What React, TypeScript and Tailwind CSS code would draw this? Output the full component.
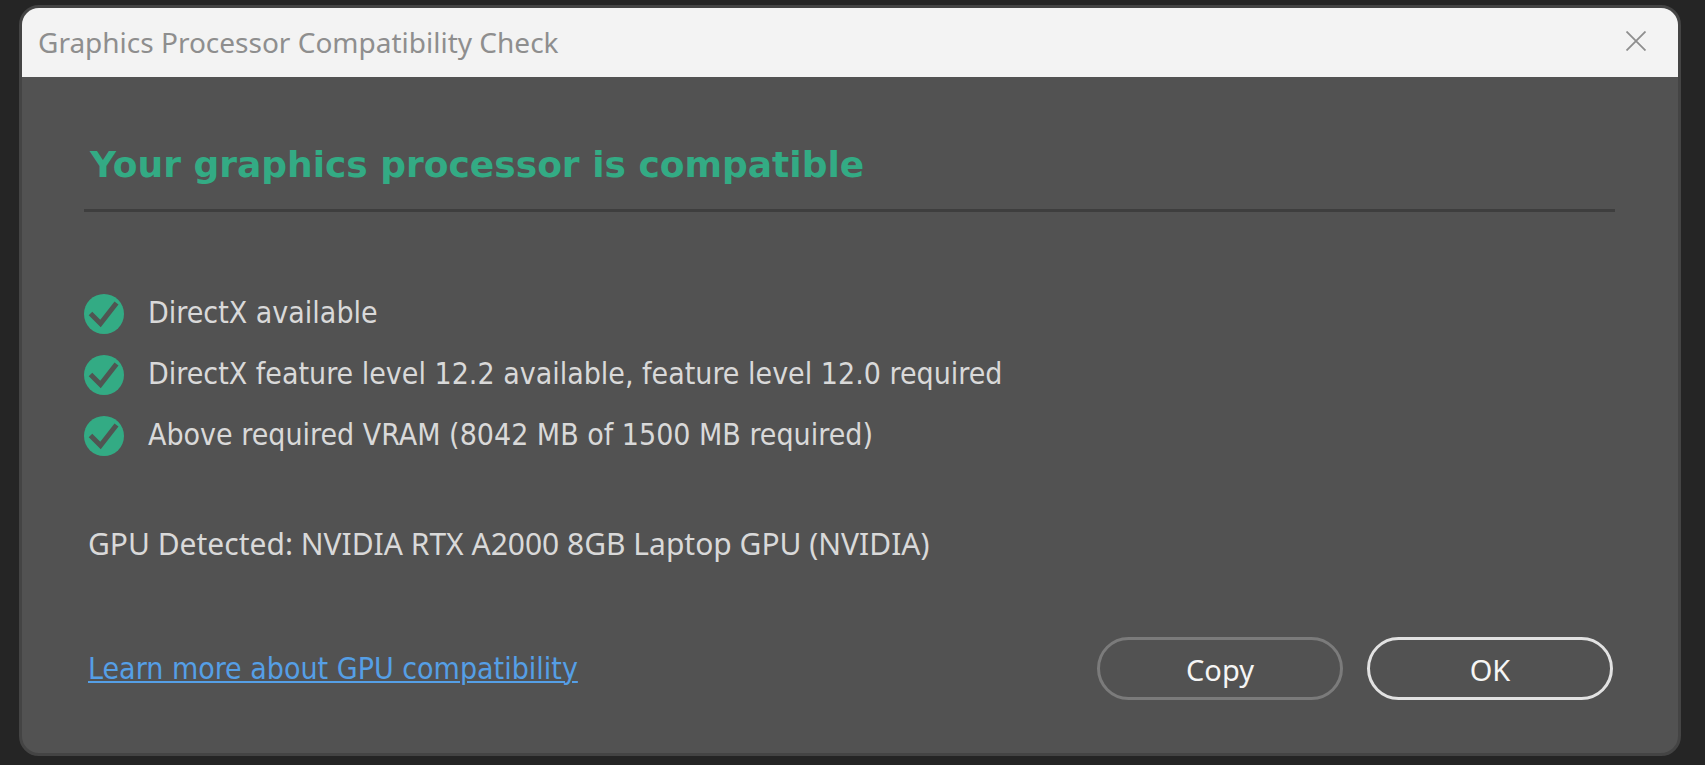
const checks = [
  "DirectX available",
  "DirectX feature level 12.2 available, feature level 12.0 required",
  "Above required VRAM (8042 MB of 1500 MB required)",
];

function CheckBadge() {
  return (
    <svg viewBox="0 0 40 40" className="h-10 w-10 shrink-0" aria-hidden="true">
      <circle cx="20" cy="20" r="20" fill="#33ab84" />
      <path d="M6.5 19.5 L16.5 29.5 L32.5 9" fill="none" stroke="#505552" strokeWidth="5" />
    </svg>
  );
}

export default function App() {
  return (
    <main className="flex min-h-screen bg-[#252525] pt-[5px] pr-6 pb-[9px] pl-[19px] font-['Noto_Sans',sans-serif]">
      <section
        role="dialog"
        aria-labelledby="dialog-title"
        className="flex flex-1 flex-col overflow-hidden rounded-[20px] border-3 border-[#444444] bg-[#525252]"
      >
        <header className="flex h-[69px] items-start justify-between bg-[#f3f3f3] pt-3.5 pr-[22px] pl-4 text-[#8e8e8e]">
          <h1 id="dialog-title" className="text-[28px] leading-10">
            Graphics Processor Compatibility Check
          </h1>
          <button type="button" aria-label="Close" className="flex h-[38px] w-10 items-center justify-center">
            <svg viewBox="0 0 20 20" className="h-5 w-5" fill="none" stroke="currentColor" strokeWidth="1.8">
              <path d="M0.5 0.5 L19.5 19.5 M19.5 0.5 L0.5 19.5" />
            </svg>
          </button>
        </header>

        <div className="flex flex-1 flex-col pt-16 pr-[63px] pb-[53px] pl-[62px]">
          <h2 className="border-b-3 border-[#3e3e3e] pb-5 pl-[6px] font-['DejaVu_Sans',sans-serif] text-[36px] leading-12 font-bold text-[#33ab84]">
            Your graphics processor is compatible
          </h2>

          <ul className="mt-[82px] flex flex-col gap-[21px] font-['DejaVu_Sans_Condensed','DejaVu_Sans',sans-serif] text-[30px] leading-[38px] text-[#d9d9d9]">
            {checks.map((check) => (
              <li key={check} className="flex items-start gap-6">
                <CheckBadge />
                <span>{check}</span>
              </li>
            ))}
          </ul>

          <p className="mt-[68px] pl-1 text-[30px] leading-10 text-[#d9d9d9]">
            GPU Detected: NVIDIA RTX A2000 8GB Laptop GPU (NVIDIA)
          </p>

          <footer className="mt-auto flex items-end justify-between pr-0.5 pl-1">
            <a
              href="#gpu-compatibility"
              className="pb-[11px] font-['DejaVu_Sans_Condensed','DejaVu_Sans',sans-serif] text-[30px] leading-10 text-[#559fe6] underline decoration-2 underline-offset-2"
            >
              Learn more about GPU compatibility
            </a>
            <div className="flex gap-6 text-[29px] text-[#f5f5f5]">
              <button type="button" className="h-[63px] w-[246px] rounded-full border-3 border-[#7b7b7b] pt-0.5">
                Copy
              </button>
              <button type="button" className="h-[63px] w-[246px] rounded-full border-3 border-[#e2e2e2] pt-0.5">
                OK
              </button>
            </div>
          </footer>
        </div>
      </section>
    </main>
  );
}
